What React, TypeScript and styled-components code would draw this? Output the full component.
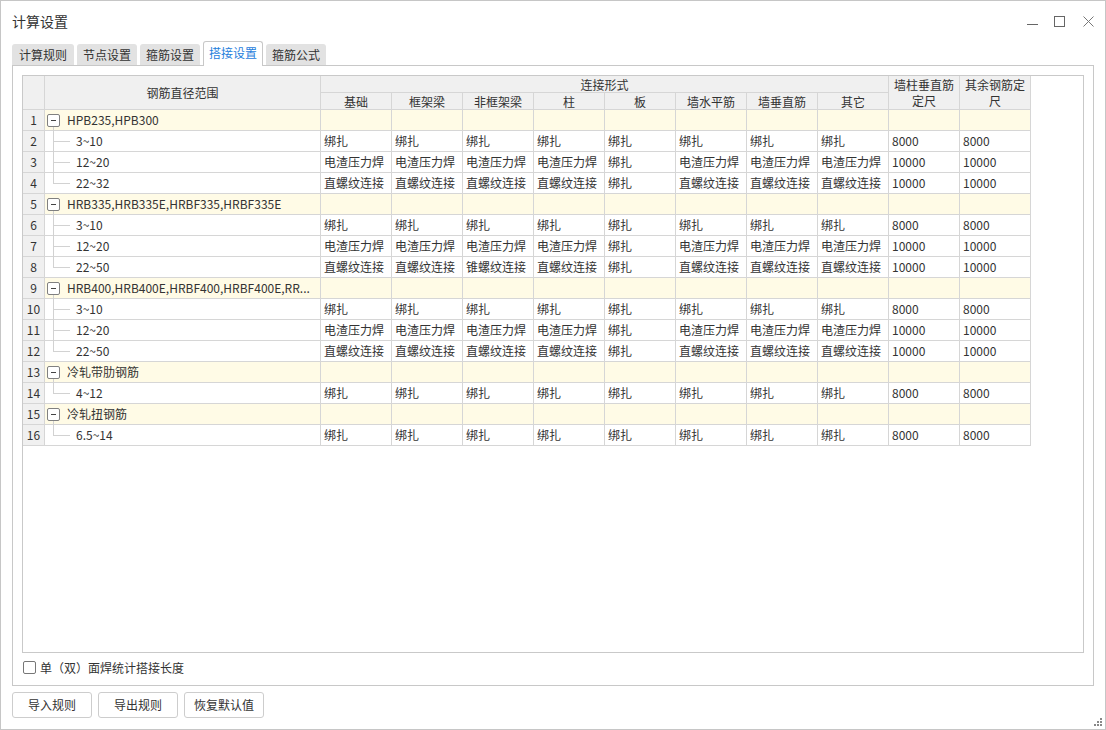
import React from "react";
import styled, { createGlobalStyle } from "styled-components";

const GlobalStyle = createGlobalStyle`
  html, body { margin: 0; padding: 0; background: #fff; }
  body {
    font-family: "Noto Sans CJK SC", "Noto Sans", sans-serif;
    font-size: 12px;
    color: #333;
  }
  * { box-sizing: border-box; }
`;

const Window = styled.div`
  position: relative;
  width: 1106px;
  height: 730px;
  border: 1px solid #c6c6c6;
  background: #fff;
  padding: 0 11px;
  display: flex;
  flex-direction: column;
`;

const TitleBar = styled.div`
  height: 40px;
  display: flex;
  align-items: center;
  justify-content: space-between;
`;

const Title = styled.div`
  font-size: 14px;
  line-height: 16px;
  margin-top: -1px;
  color: #333;
`;

const Controls = styled.div`
  display: flex;
  align-items: center;
`;

const ControlIcon = styled.svg<{ $gap: number }>`
  width: 11px;
  height: 11px;
  margin-left: ${(p) => p.$gap}px;
  display: block;
`;

const TabStrip = styled.div`
  position: relative;
  z-index: 1;
  height: 24px;
  display: flex;
  align-items: flex-end;
  gap: 3px;
`;

const Tab = styled.div<{ $active?: boolean; $w: number }>`
  width: ${(p) => p.$w}px;
  height: ${(p) => (p.$active ? 25 : 21)}px;
  margin-bottom: ${(p) => (p.$active ? -1 : 0)}px;
  display: flex;
  align-items: center;
  justify-content: center;
  font-size: 12px;
  line-height: 16px;
  padding-bottom: ${(p) => (p.$active ? 2 : 0)}px;
  color: ${(p) => (p.$active ? "#1f80dc" : "#333")};
  background: ${(p) => (p.$active ? "#fff" : "#e2e2e2")};
  border: ${(p) => (p.$active ? "1px solid #c8c8c8" : "none")};
  border-bottom: none;
  border-radius: 3px 3px 0 0;
`;

const Panel = styled.div`
  height: 621px;
  border: 1px solid #c8c8c8;
  padding: 9px;
  display: flex;
  flex-direction: column;
`;

const TableBox = styled.div`
  height: 578px;
  border: 1px solid #c9c9c9;
  overflow: hidden;
  background: #fff;
`;

const Grid = styled.div`
  display: grid;
  grid-template-columns: 22px 276px repeat(10, 71px);
  grid-template-rows: 17px 17px;
  grid-auto-rows: 21px;
  width: max-content;
`;

const HeadCell = styled.div<{ $rows?: number; $cols?: number }>`
  grid-row: span ${(p) => p.$rows ?? 1};
  grid-column: span ${(p) => p.$cols ?? 1};
  background: #f0f0f0;
  border-right: 1px solid #d6d6d6;
  border-bottom: 1px solid #d6d6d6;
  display: flex;
  align-items: center;
  justify-content: center;
  text-align: center;
  line-height: 16px;
  padding: 1px 1px 0;
  color: #333;
`;

const NumCell = styled.div`
  background: #f0f0f0;
  border-right: 1px solid #d6d6d6;
  border-bottom: 1px solid #d6d6d6;
  display: flex;
  align-items: center;
  justify-content: center;
  line-height: 20px;
`;

const NameCell = styled.div<{ $group?: boolean }>`
  position: relative;
  background: ${(p) => (p.$group ? "#fffbe6" : "#fff")};
  border-right: 1px solid #d6d6d6;
  border-bottom: 1px solid #d6d6d6;
  display: flex;
  align-items: center;
  padding: 0 4px 0 2px;
  line-height: 20px;
  min-width: 0;
`;

const NameText = styled.span`
  white-space: nowrap;
  min-width: 0;
`;

const MinusBox = styled.span`
  position: relative;
  flex: none;
  width: 13px;
  height: 13px;
  margin-right: 7px;
  border: 1px solid #808080;
  border-radius: 2px;
  background: #fff;
  &::before {
    content: "";
    position: absolute;
    left: 3px;
    top: 5px;
    width: 5px;
    height: 1px;
    background: #444;
  }
  &::after {
    content: "";
    position: absolute;
    left: 5px;
    top: 12px;
    width: 1px;
    height: 6px;
    background: #d2d2d2;
  }
`;

const Connector = styled.span<{ $last?: boolean }>`
  position: relative;
  flex: none;
  align-self: stretch;
  width: 23px;
  margin-left: 6px;
  &::before {
    content: "";
    position: absolute;
    left: 0;
    top: -1px;
    bottom: ${(p) => (p.$last ? "10px" : "-1px")};
    width: 1px;
    background: #d2d2d2;
  }
  &::after {
    content: "";
    position: absolute;
    left: 0;
    top: 10px;
    width: 17px;
    height: 1px;
    background: #d2d2d2;
  }
`;

const DataCell = styled.div<{ $group?: boolean }>`
  background: ${(p) => (p.$group ? "#fffbe6" : "#fff")};
  border-right: 1px solid #d6d6d6;
  border-bottom: 1px solid #d6d6d6;
  padding: 0 1px 0 3px;
  line-height: 20px;
  white-space: nowrap;
`;

const CheckRow = styled.label`
  margin-top: 8px;
  display: flex;
  align-items: center;
  height: 13px;
  line-height: 13px;
`;

const CheckBox = styled.span`
  width: 13px;
  height: 13px;
  margin-left: 1px;
  margin-right: 4px;
  border: 1px solid #777;
  border-radius: 2px;
  background: #fff;
`;

const ButtonRow = styled.div`
  margin-top: 6px;
  display: flex;
  gap: 6px;
`;

const Button = styled.button`
  width: 80px;
  height: 26px;
  border: 1px solid #cdcdcd;
  border-radius: 3px;
  background: #fff;
  font-family: "Noto Sans CJK SC", "Noto Sans", sans-serif;
  font-size: 12px;
  color: #333;
  padding: 0;
  line-height: 16px;
`;

const Grip = styled.svg`
  position: absolute;
  right: 3px;
  bottom: 3px;
  width: 8px;
  height: 8px;
`;

type Row =
  | { kind: "group"; label: string }
  | { kind: "item"; label: string; values: string[]; last?: boolean };

const BZ = "绑扎";
const DZ = "电渣压力焊";
const ZL = "直螺纹连接";
const ZhuiL = "锥螺纹连接";

const bind = [BZ, BZ, BZ, BZ, BZ, BZ, BZ, BZ, "8000", "8000"];
const weld = [DZ, DZ, DZ, DZ, BZ, DZ, DZ, DZ, "10000", "10000"];
const thread = [ZL, ZL, ZL, ZL, BZ, ZL, ZL, ZL, "10000", "10000"];
const thread2 = [ZL, ZL, ZhuiL, ZL, BZ, ZL, ZL, ZL, "10000", "10000"];

const rows: Row[] = [
  { kind: "group", label: "HPB235,HPB300" },
  { kind: "item", label: "3~10", values: bind },
  { kind: "item", label: "12~20", values: weld },
  { kind: "item", label: "22~32", values: thread, last: true },
  { kind: "group", label: "HRB335,HRB335E,HRBF335,HRBF335E" },
  { kind: "item", label: "3~10", values: bind },
  { kind: "item", label: "12~20", values: weld },
  { kind: "item", label: "22~50", values: thread2, last: true },
  { kind: "group", label: "HRB400,HRB400E,HRBF400,HRBF400E,RR..." },
  { kind: "item", label: "3~10", values: bind },
  { kind: "item", label: "12~20", values: weld },
  { kind: "item", label: "22~50", values: thread, last: true },
  { kind: "group", label: "冷轧带肋钢筋" },
  { kind: "item", label: "4~12", values: bind, last: true },
  { kind: "group", label: "冷轧扭钢筋" },
  { kind: "item", label: "6.5~14", values: bind, last: true },
];

const subHeads = ["基础", "框架梁", "非框架梁", "柱", "板", "墙水平筋", "墙垂直筋", "其它"];
const tabs = ["计算规则", "节点设置", "箍筋设置", "搭接设置", "箍筋公式"];

export default function App() {
  return (
    <>
      <GlobalStyle />
      <Window>
        <TitleBar>
          <Title>计算设置</Title>
          <Controls>
            <ControlIcon $gap={0} viewBox="0 0 11 11">
              <line x1="0" y1="8.5" x2="11" y2="8.5" stroke="#666" strokeWidth="1" />
            </ControlIcon>
            <ControlIcon $gap={16} viewBox="0 0 11 11">
              <rect x="0.5" y="0.5" width="10" height="10" fill="none" stroke="#666" strokeWidth="1" />
            </ControlIcon>
            <ControlIcon $gap={18} viewBox="0 0 11 11">
              <path d="M0.5 0.5 L10.5 10.5 M10.5 0.5 L0.5 10.5" stroke="#777" strokeWidth="1" />
            </ControlIcon>
          </Controls>
        </TitleBar>
        <TabStrip>
          {tabs.map((t, i) => (
            <Tab key={t} $w={i === 0 ? 62 : 60} $active={i === 3}>
              {t}
            </Tab>
          ))}
        </TabStrip>
        <Panel>
          <TableBox>
            <Grid>
              <HeadCell $rows={2} />
              <HeadCell $rows={2}>钢筋直径范围</HeadCell>
              <HeadCell $cols={8}>连接形式</HeadCell>
              <HeadCell $rows={2}>墙柱垂直筋定尺</HeadCell>
              <HeadCell $rows={2}>其余钢筋定尺</HeadCell>
              {subHeads.map((h) => (
                <HeadCell key={h}>{h}</HeadCell>
              ))}
              {rows.map((r, i) => (
                <React.Fragment key={i}>
                  <NumCell>{i + 1}</NumCell>
                  {r.kind === "group" ? (
                    <>
                      <NameCell $group>
                        <MinusBox />
                        <NameText>{r.label}</NameText>
                      </NameCell>
                      {Array.from({ length: 10 }).map((_, j) => (
                        <DataCell key={j} $group />
                      ))}
                    </>
                  ) : (
                    <>
                      <NameCell>
                        <Connector $last={r.last} />
                        <NameText>{r.label}</NameText>
                      </NameCell>
                      {r.values.map((v, j) => (
                        <DataCell key={j}>{v}</DataCell>
                      ))}
                    </>
                  )}
                </React.Fragment>
              ))}
            </Grid>
          </TableBox>
          <CheckRow>
            <CheckBox />
            单（双）面焊统计搭接长度
          </CheckRow>
        </Panel>
        <ButtonRow>
          <Button>导入规则</Button>
          <Button>导出规则</Button>
          <Button>恢复默认值</Button>
        </ButtonRow>
        <Grip viewBox="0 0 8 8">
          <rect x="6" y="0" width="2" height="2" fill="#888" />
          <rect x="3" y="3" width="2" height="2" fill="#888" />
          <rect x="6" y="3" width="2" height="2" fill="#888" />
          <rect x="0" y="6" width="2" height="2" fill="#888" />
          <rect x="3" y="6" width="2" height="2" fill="#888" />
          <rect x="6" y="6" width="2" height="2" fill="#888" />
        </Grip>
      </Window>
    </>
  );
}
